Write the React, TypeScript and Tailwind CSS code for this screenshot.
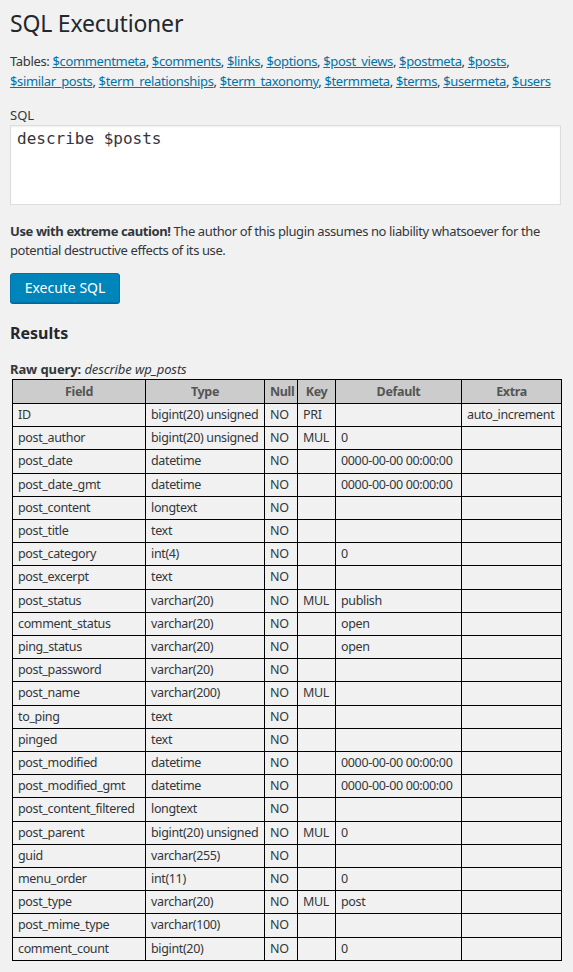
import React from "react";

const tables = [
  "$commentmeta",
  "$comments",
  "$links",
  "$options",
  "$post_views",
  "$postmeta",
  "$posts",
  "$similar_posts",
  "$term_relationships",
  "$term_taxonomy",
  "$termmeta",
  "$terms",
  "$usermeta",
  "$users",
];

const rows: [string, string, string, string, string, string][] = [
  ["ID", "bigint(20) unsigned", "NO", "PRI", "", "auto_increment"],
  ["post_author", "bigint(20) unsigned", "NO", "MUL", "0", ""],
  ["post_date", "datetime", "NO", "", "0000-00-00 00:00:00", ""],
  ["post_date_gmt", "datetime", "NO", "", "0000-00-00 00:00:00", ""],
  ["post_content", "longtext", "NO", "", "", ""],
  ["post_title", "text", "NO", "", "", ""],
  ["post_category", "int(4)", "NO", "", "0", ""],
  ["post_excerpt", "text", "NO", "", "", ""],
  ["post_status", "varchar(20)", "NO", "MUL", "publish", ""],
  ["comment_status", "varchar(20)", "NO", "", "open", ""],
  ["ping_status", "varchar(20)", "NO", "", "open", ""],
  ["post_password", "varchar(20)", "NO", "", "", ""],
  ["post_name", "varchar(200)", "NO", "MUL", "", ""],
  ["to_ping", "text", "NO", "", "", ""],
  ["pinged", "text", "NO", "", "", ""],
  ["post_modified", "datetime", "NO", "", "0000-00-00 00:00:00", ""],
  ["post_modified_gmt", "datetime", "NO", "", "0000-00-00 00:00:00", ""],
  ["post_content_filtered", "longtext", "NO", "", "", ""],
  ["post_parent", "bigint(20) unsigned", "NO", "MUL", "0", ""],
  ["guid", "varchar(255)", "NO", "", "", ""],
  ["menu_order", "int(11)", "NO", "", "0", ""],
  ["post_type", "varchar(20)", "NO", "MUL", "post", ""],
  ["post_mime_type", "varchar(100)", "NO", "", "", ""],
  ["comment_count", "bigint(20)", "NO", "", "0", ""],
];

const headers = ["Field", "Type", "Null", "Key", "Default", "Extra"];
const widths = ["w-[133px]", "w-[119px]", "w-[33px]", "w-[38px]", "w-[126px]", "w-[100px]"];

export default function App() {
  return (
    <div
      className="min-h-[972px] w-[573px] bg-[#f1f1f1] text-[#32373c] text-[13px] leading-[1.4]"
      style={{ fontFamily: '"Noto Sans", "Open Sans", sans-serif' }}
    >
      <div className="px-[10px] pt-[5px]">
        <h1 className="text-[23px] leading-[29px] font-normal text-[#23282d] py-[4px] tracking-[-0.2px]">
          SQL Executioner
        </h1>
        <p className="mt-[9px] leading-[20px] tracking-[-0.35px]">
          Tables:{" "}
          {tables.map((t, i) => (
            <React.Fragment key={t}>
              <a href="#" className="text-[#0073aa] underline">
                {t}
              </a>
              {i < tables.length - 1 ? ", " : ""}
            </React.Fragment>
          ))}
        </p>
        <div className="mt-[15px] leading-[18px]">SQL</div>
        <div className="mt-[1px] h-[80px] w-[551px] bg-white border border-[#ddd] shadow-[inset_0_1px_2px_rgba(0,0,0,0.07)] px-[6px] pt-[3px]">
          <div
            className="text-[16px] leading-[20px] text-[#32373c]"
            style={{ fontFamily: '"DejaVu Sans Mono", monospace' }}
          >
            describe $posts
          </div>
        </div>
        <p className="mt-[17px] leading-[19px] tracking-[-0.4px]">
          <strong className="font-bold mr-[3px]">Use with extreme caution!</strong>The author of this plugin assumes
          no liability whatsoever for the potential destructive effects of its use.
        </p>
        <button className="mt-[13px] h-[30px] w-[110px] rounded-[3px] bg-[#0085ba] border border-[#0073aa] text-white text-[14px] shadow-[0_1px_0_#006799]">
          Execute SQL
        </button>
        <h2 className="mt-[18px] text-[16px] font-bold leading-[24px] text-[#23282d]">Results</h2>
        <p className="mt-[16px] text-[13px] leading-[16px] tracking-[-0.1px]">
          <strong className="font-bold">Raw query:</strong> <em>describe wp_posts</em>
        </p>
        <table className="ml-[2px] mt-[2px] border-collapse border border-black table-fixed w-[550px] text-[12.5px] tracking-[-0.35px]">
          <thead>
            <tr className="bg-[#cccccc]">
              {headers.map((h, i) => (
                <th
                  key={h}
                  className={`${widths[i]} border border-black px-[5px] py-[2px] leading-[19px] font-bold text-[#555] text-center`}
                >
                  {h}
                </th>
              ))}
            </tr>
          </thead>
          <tbody>
            {rows.map((r) => (
              <tr key={r[0]}>
                {r.map((c, i) => (
                  <td
                    key={i}
                    className="border border-black px-[5px] py-[2px] leading-[18.2px] whitespace-nowrap overflow-visible"
                  >
                    {c}
                  </td>
                ))}
              </tr>
            ))}
          </tbody>
        </table>
      </div>
    </div>
  );
}
